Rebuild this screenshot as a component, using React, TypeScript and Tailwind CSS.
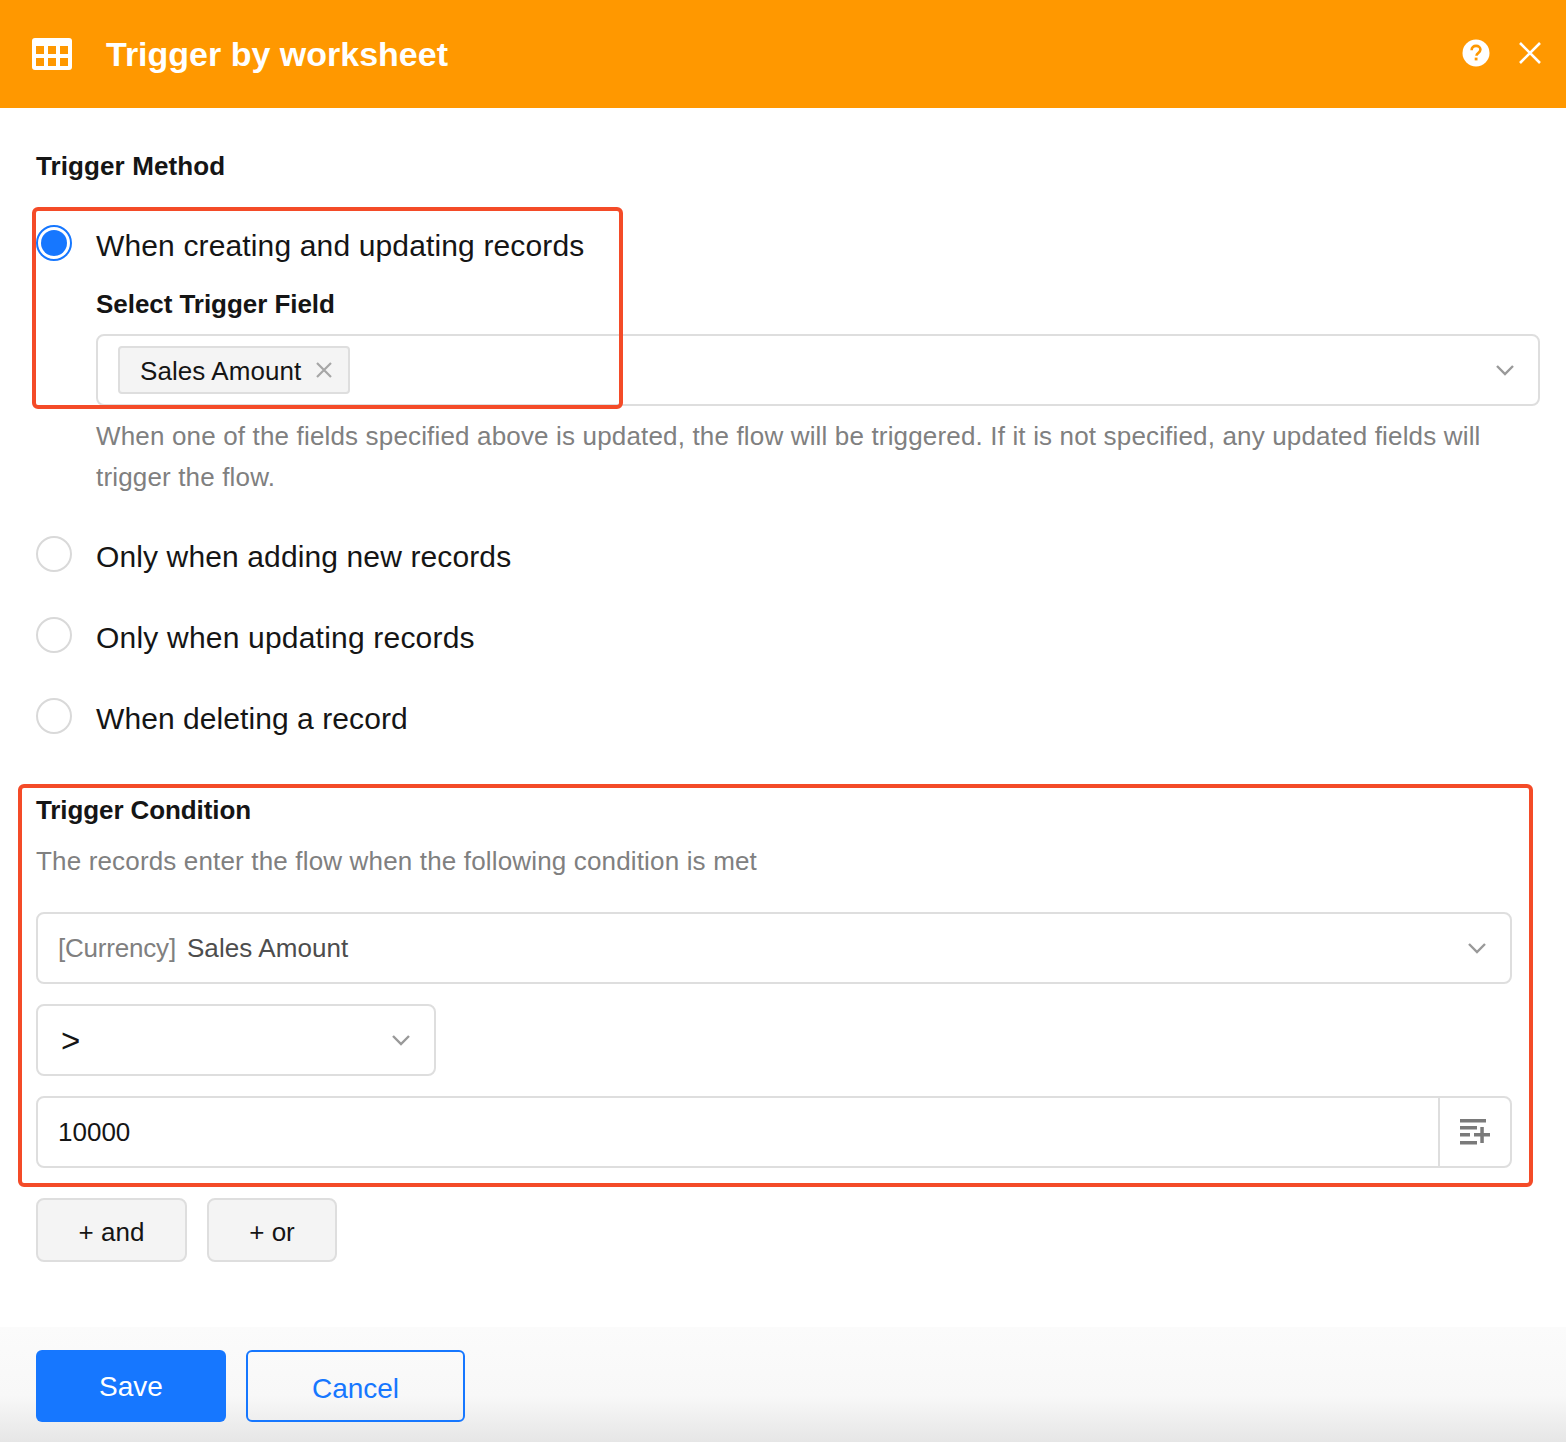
const Radio = ({ checked = false }: { checked?: boolean }) => (
  <span className={`-mt-px flex h-9 w-9 shrink-0 items-center justify-center rounded-full border-2 bg-white ${checked ? 'border-[#1677ff]' : 'border-[#d9d9d9]'}`}>
    {checked && <span className="h-[26px] w-[26px] rounded-full bg-[#1677ff]" />}
  </span>
);

const Chevron = () => (
  <svg width="20" height="12" viewBox="0 0 20 12" fill="none" stroke="#999999" strokeWidth="2.4">
    <path d="M2 2l8 8 8-8" />
  </svg>
);

const TableIcon = () => (
  <svg width="40" height="32" viewBox="0 0 40 32" className="shrink-0">
    <rect width="40" height="32" rx="3" fill="#fff" />
    {[8, 20].map(y =>
      [4, 16, 28].map(x => <rect key={`${x}-${y}`} x={x} y={y} width="8" height="8" fill="#ff9800" />)
    )}
  </svg>
);

const HelpIcon = () => (
  <svg width="28" height="28" viewBox="0 0 28 28" className="-translate-y-px">
    <circle cx="14" cy="14" r="13.5" fill="#fff" />
    <path d="M9.6 11.2c0-2.7 2-4.3 4.500-4.300 2.500 0 4.300 1.500 4.300 3.700 0 1.800-1 2.700-2.200 3.500-1.200.8-1.700 1.300-1.700 2.700" fill="none" stroke="#ff9800" strokeWidth="2.600" />
    <rect x="12.700" y="18.600" width="2.800" height="2.800" fill="#ff9800" />
  </svg>
);

const CloseIcon = () => (
  <svg width="24" height="24" viewBox="0 0 24 24" fill="none" stroke="#fff" strokeWidth="2.600" className="-translate-y-px">
    <path d="M2 2l20 20M22 2L2 22" />
  </svg>
);

const ListPlusIcon = () => (
  <svg width="30" height="26" viewBox="0 0 30 26" fill="#7a7a7a">
    <rect x="0" y="0" width="26" height="3.500" />
    <rect x="0" y="7" width="17" height="3.500" />
    <rect x="0" y="14" width="10" height="3.500" />
    <rect x="0" y="22" width="17" height="3.500" />
    <rect x="14" y="14" width="16" height="3.500" />
    <rect x="20.300" y="8" width="3.500" height="16" />
  </svg>
);

export default function App() {
  const others = [
    { label: 'Only when adding new records', cls: 'tracking-[0.12px]' },
    { label: 'Only when updating records', cls: 'tracking-[0.2px]' },
    { label: 'When deleting a record', cls: 'tracking-[0.07px]' },
  ];

  return (
    <div className="relative flex h-[1442px] w-[1566px] flex-col overflow-hidden bg-white font-['Liberation_Sans',Arial,sans-serif] text-[#151515]">
      <header className="flex h-[108px] shrink-0 items-center bg-[#ff9800] pl-8 pr-6 text-white">
        <TableIcon />
        <h1 className="ml-[34px] text-[34px] font-bold">Trigger by worksheet</h1>
        <div className="ml-auto flex items-center gap-7">
          <HelpIcon />
          <CloseIcon />
        </div>
      </header>

      <main className="flex-1 pl-9 pr-[26px] pt-[38px]">
        <div className="h-10 text-[26px] font-bold leading-10 tracking-[0.1px]">Trigger Method</div>

        <div className="mt-10 flex h-10 gap-6 text-[30px] leading-10 tracking-[0.14px]">
          <Radio checked />
          <span>When creating and updating records</span>
        </div>
        <div className="ml-[60px]">
          <div className="mt-[18px] h-10 text-[26px] font-bold leading-10 tracking-[-0.05px]">Select Trigger Field</div>
          <div className="mt-2.5 flex h-[72px] items-center justify-between rounded-lg border-2 border-[#dedede] pl-5 pr-[23px]">
            <span className="flex h-12 items-center rounded border-2 border-[#dedede] bg-[#f4f4f4] pl-5 pr-[15px] pt-0.5 text-[26px] tracking-[0.08px]">
              Sales Amount
              <svg width="18" height="18" viewBox="0 0 18 18" fill="none" stroke="#a6a6a6" strokeWidth="2.200" className="ml-3.5 -mt-0.5">
                <path d="M2 2l14 14M16 2L2 16" />
              </svg>
            </span>
            <Chevron />
          </div>
          <p className="mt-2.5 text-[26px] leading-[41px] tracking-[0.16px] text-[#808080]">
            When one of the fields specified above is updated, the flow will be triggered. If it is not specified, any updated fields will trigger the flow.
          </p>
        </div>

        <div className="mt-[39px] flex flex-col gap-[41px]">
          {others.map(o => (
            <div key={o.label} className={`flex h-10 gap-6 text-[30px] leading-10 ${o.cls}`}>
              <Radio />
              <span>{o.label}</span>
            </div>
          ))}
        </div>

        <div className="mt-[51px] h-10 text-[26px] font-bold leading-10 tracking-[-0.1px]">Trigger Condition</div>
        <div className="mt-[11px] h-10 text-[26px] leading-10 tracking-[0.16px] text-[#808080]">The records enter the flow when the following condition is met</div>

        <div className="mt-[31px] flex h-[72px] w-[1476px] items-center justify-between rounded-lg border-2 border-[#dedede] pl-5 pr-[23px] text-[26px]">
          <span>
            <span className="tracking-[-0.2px] text-[#808080]">[Currency]</span>
            <span className="ml-[11px] tracking-[0.08px] text-[#4d4d4d]">Sales Amount</span>
          </span>
          <Chevron />
        </div>
        <div className="mt-5 flex h-[72px] w-[400px] items-center justify-between rounded-lg border-2 border-[#dedede] pl-[23px] pr-[23px]">
          <span className="text-[33px] font-light leading-none">&gt;</span>
          <Chevron />
        </div>
        <div className="mt-5 flex h-[72px] w-[1476px] rounded-lg border-2 border-[#dedede] text-[26px]">
          <div className="flex flex-1 items-center pl-5">10000</div>
          <div className="flex w-[72px] items-center justify-center border-l-2 border-[#dedede]">
            <ListPlusIcon />
          </div>
        </div>

        <div className="mt-[30px] flex gap-5 text-[26px]">
          <button className="h-16 w-[151px] rounded-lg border-2 border-[#dedede] bg-[#f4f4f4] pt-[5px]">+ and</button>
          <button className="h-16 w-[130px] rounded-lg border-2 border-[#dedede] bg-[#f4f4f4] pt-[5px]">+ or</button>
        </div>
      </main>

      <footer className="flex h-[115px] shrink-0 gap-5 bg-gradient-to-b from-[#fbfbfb] via-[#f8f8f8] via-60% to-[#e6e6e6] pl-9 pt-[23px] text-[28px]">
        <button className="h-[72px] w-[190px] rounded-md bg-[#1677ff] pt-0.5 text-white">Save</button>
        <button className="h-[72px] w-[219px] rounded-md border-2 border-[#1677ff] pt-1.5 text-[#1677ff]">Cancel</button>
      </footer>

      <div className="absolute left-8 top-[207px] h-[202px] w-[591px] rounded-md border-4 border-[#f44b28]" />
      <div className="absolute left-[18px] top-[784px] h-[403px] w-[1515px] rounded-md border-4 border-[#f44b28]" />
    </div>
  );
}
